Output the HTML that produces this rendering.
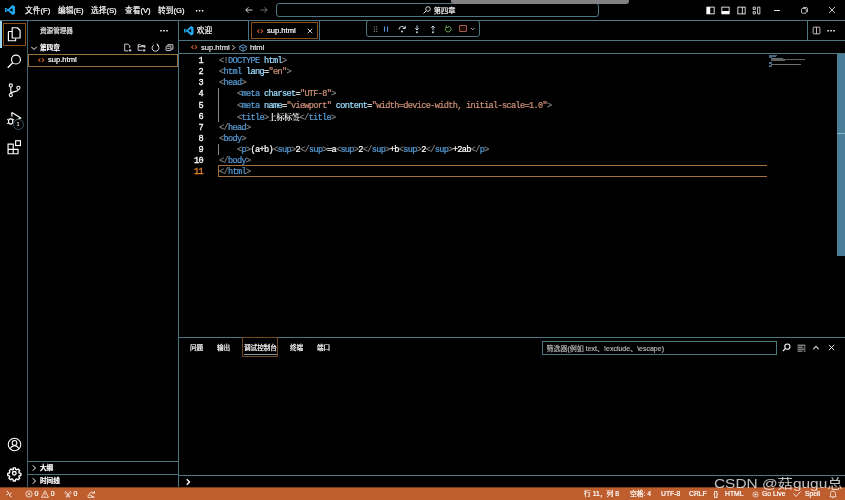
<!DOCTYPE html>
<html><head><meta charset="utf-8"><title>sup.html</title>
<style>

*{box-sizing:border-box;margin:0;padding:0}
html,body{width:845px;height:500px;background:#000;overflow:hidden}
body{will-change:transform}
body{position:relative;font-family:"Liberation Sans","Noto Sans CJK SC",sans-serif;color:#fff;font-size:7.6px;line-height:1}
.a{position:absolute}
.t{position:absolute;white-space:nowrap;line-height:10px;height:10px;-webkit-text-stroke:0.2px}
.hl{position:absolute;height:1px;background:#4d7682}
.vl{position:absolute;width:1px;background:#4d7682}
.code{position:absolute;left:219px;font-family:"Liberation Mono","Noto Sans CJK SC",monospace;font-size:8.6px;letter-spacing:-0.665px;white-space:pre;line-height:11.2px;height:11.2px;color:#fff;-webkit-text-stroke:0.22px}
.ln{position:absolute;left:180px;width:23px;text-align:right;font-family:"Liberation Mono",monospace;font-size:8.6px;letter-spacing:-0.665px;line-height:11.2px;height:11.2px;color:#fff;-webkit-text-stroke:0.3px}
.g{color:#808080}.b{color:#569cd6}.c{color:#9cdcfe}.s{color:#ce9178}
svg.i{position:absolute;overflow:visible}

</style></head><body>
<div class="hl" style="left:0;top:20px;width:845px"></div><div class="vl" style="left:27px;top:21px;height:467px;background:#41636e"></div><div class="vl" style="left:178px;top:21px;height:467px"></div><div class="hl" style="left:179px;top:40px;width:666px"></div><div class="hl" style="left:179px;top:53px;width:666px"></div><div class="hl" style="left:179px;top:337px;width:666px"></div><div class="hl" style="left:179px;top:475px;width:666px"></div><div class="hl" style="left:28px;top:461px;width:150px"></div><div class="hl" style="left:28px;top:474px;width:150px"></div><div class="vl" style="left:248px;top:21px;height:19px"></div><div class="vl" style="left:319px;top:21px;height:19px"></div><div class="vl" style="left:807px;top:21px;height:19px"></div><div class="a" style="left:451px;top:0;width:178px;height:4px;z-index:3;background:#828282;border-radius:0 0 3px 3px"></div><svg class="i" style="left:5px;top:5px" width="10" height="10" viewBox="0 0 100 100"><path d="M74 0 L29 43 L10 28 L0 33 L0 67 L10 72 L29 57 L74 100 L100 88 L100 12 Z M75 30 L75 70 L45 50 Z M10 60 L10 40 L21 50 Z" fill="#23a9f2" fill-rule="evenodd"/></svg><div class="t" style="left:25px;top:5.500px;font-size:7.700px">文件(F)</div><div class="t" style="left:58px;top:5.500px;font-size:7.700px">编辑(E)</div><div class="t" style="left:91px;top:5.500px;font-size:7.700px">选择(S)</div><div class="t" style="left:125px;top:5.500px;font-size:7.700px">查看(V)</div><div class="t" style="left:158px;top:5.500px;font-size:7.700px">转到(G)</div><div class="t" style="left:195.500px;top:5.500px;letter-spacing:0.5px;font-weight:bold">···</div><svg class="i" style="left:245px;top:6px" width="8" height="8" viewBox="0 0 16 16"><path d="M15 8H2M7 2.5L1.5 8L7 13.5" stroke="#fff" stroke-width="1.6" fill="none"/></svg><svg class="i" style="left:260px;top:6px" width="8" height="8" viewBox="0 0 16 16"><path d="M1 8H14M9 2.5L14.5 8L9 13.5" stroke="#8a8a8a" stroke-width="1.6" fill="none"/></svg><div class="a" style="left:276px;top:3px;width:323px;height:14px;border:1px solid #4d7682;border-radius:3px"></div><svg class="i" style="left:423px;top:6px" width="8" height="8" viewBox="0 0 16 16"><circle cx="10" cy="6" r="4.6" stroke="#fff" stroke-width="1.6" fill="none"/><path d="M6.6 9.4L1 15" stroke="#fff" stroke-width="1.8"/></svg><div class="t" style="left:433.800px;top:5.500px;font-size:7.200px">第四章</div><svg class="i" style="left:706px;top:5.5px" width="9" height="9" viewBox="0 0 16 16"><rect x="1.5" y="2" width="13" height="12" stroke="#fff" stroke-width="1.5" fill="none"/><rect x="1.5" y="2" width="6" height="12" fill="#fff"/></svg><svg class="i" style="left:721px;top:5.5px" width="9" height="9" viewBox="0 0 16 16"><rect x="1.5" y="2" width="13" height="12" stroke="#fff" stroke-width="1.5" fill="none"/><rect x="1.5" y="9" width="13" height="5" fill="#fff"/></svg><svg class="i" style="left:737px;top:5.5px" width="9" height="9" viewBox="0 0 16 16"><rect x="1.5" y="2" width="13" height="12" stroke="#fff" stroke-width="1.5" fill="none"/><path d="M9.5 2V14" stroke="#fff" stroke-width="1.5"/></svg><svg class="i" style="left:752px;top:5.5px" width="9" height="9" viewBox="0 0 16 16"><path d="M2 2h4v4H2zM2 10h4v4H2zM10 2h4v12h-4z" stroke="#fff" stroke-width="1.4" fill="none"/></svg><div class="a" style="left:774px;top:10px;width:6px;height:1px;background:#ddd"></div><svg class="i" style="left:801px;top:6.5px" width="7" height="7" viewBox="0 0 14 14"><rect x="1" y="3" width="9.5" height="9.5" rx="2" stroke="#fff" stroke-width="1.4" fill="none"/><path d="M4 1h6.5a2.5 2.5 0 0 1 2.5 2.5V10" stroke="#fff" stroke-width="1.4" fill="none"/></svg><svg class="i" style="left:828px;top:6px" width="8" height="8" viewBox="0 0 16 16"><path d="M2 2L14 14M14 2L2 14" stroke="#fff" stroke-width="1.6"/></svg><div class="a" style="left:0;top:21px;width:1.5px;height:27px;background:#9fd7ee"></div><div class="a" style="left:3px;top:23px;width:23px;height:23px;border:1px solid #8c4f15"></div><svg class="i" style="left:6.25px;top:26.25px" width="16.5" height="16.5" viewBox="0 0 24 24"><path d="M9 2.5h7.5l4 4V17.5H9z" stroke="#fff" stroke-width="1.7" fill="none" stroke-linejoin="round"/><path d="M9 8H4.5a1 1 0 0 0-1 1V21.500h10.500V18" stroke="#fff" stroke-width="1.7" fill="none" stroke-linejoin="round"/></svg><svg class="i" style="left:6.25px;top:53.25px" width="16.5" height="16.5" viewBox="0 0 24 24"><circle cx="14.500" cy="9.5" r="6.500" stroke="#fff" stroke-width="1.7" fill="none"/><path d="M9.8 14.2L2.500 21.500" stroke="#fff" stroke-width="1.9"/></svg><svg class="i" style="left:6.25px;top:82.25px" width="16.5" height="16.5" viewBox="0 0 24 24"><circle cx="7" cy="5" r="2.300" stroke="#fff" stroke-width="1.600" fill="none"/><circle cx="7" cy="19" r="2.300" stroke="#fff" stroke-width="1.600" fill="none"/><circle cx="18" cy="8.500" r="2.300" stroke="#fff" stroke-width="1.600" fill="none"/><path d="M7 7.300V16.700M18 10.800c0 4-11 2.500-11 6" stroke="#fff" stroke-width="1.600" fill="none"/></svg><svg class="i" style="left:6.25px;top:110.25px" width="16.5" height="16.5" viewBox="0 0 24 24"><path d="M8.500 3.500L21.500 11.500L15 15" stroke="#fff" stroke-width="1.700" fill="none" stroke-linejoin="round"/><path d="M8.500 3.500V9.500" stroke="#fff" stroke-width="1.700"/><ellipse cx="6.800" cy="16.800" rx="3.200" ry="3.800" stroke="#fff" stroke-width="1.600" fill="none"/><path d="M1.500 14h2.200M1.500 19.500h2.200M10 14h2M6.800 13V11.500M4.500 12.200l1 1.200M9.200 12.200l-1 1.200" stroke="#fff" stroke-width="1.300"/></svg><div class="a" style="left:12.600px;top:119.200px;width:11px;height:11px;border-radius:5.500px;background:#000;border:1px solid #35545e;font-size:5.500px;line-height:9px;text-align:center;font-weight:bold;color:#d8d8d8">1</div><svg class="i" style="left:6.25px;top:139.25px" width="16.5" height="16.5" viewBox="0 0 24 24"><path d="M3 7.500h7.500v7.500H3zM3 15h7.500v6.500H3zM10.500 15h7v6.500h-7z" stroke="#fff" stroke-width="1.700" fill="none"/><rect x="14" y="2.500" width="7" height="7" stroke="#fff" stroke-width="1.700" fill="none"/></svg><svg class="i" style="left:6.65px;top:437px" width="15" height="15" viewBox="0 0 24 24"><circle cx="12" cy="12" r="10" stroke="#fff" stroke-width="1.700" fill="none"/><circle cx="12" cy="9.500" r="3.800" stroke="#fff" stroke-width="1.700" fill="none"/><path d="M5 19c1.500-4 4-5 7-5s5.500 1 7 5" stroke="#fff" stroke-width="1.700" fill="none"/></svg><svg class="i" style="left:6.9px;top:465.8px" width="14.6" height="14.6" viewBox="0 0 24 24"><path d="M10 2h4l.6 3 1.700.8 2.700-1.600 2.800 2.800-1.600 2.700.8 1.700 3 .6v4l-3 .6-.8 1.700 1.600 2.700-2.800 2.800-2.700-1.600-1.700.8-.6 3h-4l-.6-3-1.700-.8-2.700 1.600-2.800-2.800 1.600-2.700-.8-1.700-3-.6v-4l3-.6.8-1.700L3.200 7l2.800-2.800 2.700 1.600 1.700-.8z" transform="translate(1.200 1.200) scale(0.900)" stroke="#fff" stroke-width="2.500" fill="none" stroke-linejoin="round"/><circle cx="12" cy="12" r="3" stroke="#fff" stroke-width="2.200" fill="none"/></svg><div class="t" style="left:40px;top:26px;color:#e8e8e8;font-size:6.6px">资源管理器</div><div class="t" style="left:160px;top:26px;letter-spacing:0.5px;font-weight:bold">···</div><svg class="i" style="left:30px;top:43.500px" width="8" height="8" viewBox="0 0 16 16"><path d="M2.500 5.500L8 11L13.500 5.500" stroke="#fff" stroke-width="2" fill="none"/></svg><div class="t" style="left:40px;top:43.300px;font-size:6.600px;font-weight:bold">第四章</div><svg class="i" style="left:123px;top:43px" width="9" height="9" viewBox="0 0 16 16"><path d="M9 14H3V2h6l3 3v4" stroke="#fff" stroke-width="1.400" fill="none"/><path d="M12.500 10.500v5M10 13h5" stroke="#fff" stroke-width="1.400"/></svg><svg class="i" style="left:136.500px;top:43px" width="9" height="9" viewBox="0 0 16 16"><path d="M9 13H2V3h4l1.500 1.500H14V9M2 6.500h12" stroke="#fff" stroke-width="1.400" fill="none"/><path d="M12.500 10.500v5M10 13h5" stroke="#fff" stroke-width="1.400"/></svg><svg class="i" style="left:151px;top:43px" width="9" height="9" viewBox="0 0 16 16"><path d="M5 3.500A6 6 0 1 0 11 3.500" stroke="#fff" stroke-width="1.500" fill="none"/><path d="M11 1v3h3" stroke="#fff" stroke-width="1.400" fill="none"/></svg><svg class="i" style="left:165px;top:43px" width="9" height="9" viewBox="0 0 16 16"><rect x="2" y="5.500" width="8.500" height="8" rx="1" stroke="#fff" stroke-width="1.400" fill="none"/><path d="M5 5V3h9v8h-3M4 9.500h4.500" stroke="#fff" stroke-width="1.400" fill="none"/></svg><div class="a" style="left:28px;top:54px;width:150px;height:13px;border:1px solid #9a7040"></div><svg class="i" style="left:37.700px;top:56.900px" width="6.400" height="6.400" viewBox="0 0 16 16"><path d="M6 3.500L1.500 8L6 12.500M10 3.500L14.500 8L10 12.500" stroke="#c45a28" stroke-width="2.700" fill="none"/></svg><div class="t" style="left:48px;top:55px">sup.html</div><svg class="i" style="left:30px;top:464px" width="8" height="8" viewBox="0 0 16 16"><path d="M5.500 2.500L11 8L5.500 13.500" stroke="#fff" stroke-width="2" fill="none"/></svg><div class="t" style="left:40px;top:463px;font-size:6.600px;font-weight:bold">大纲</div><svg class="i" style="left:30px;top:477px" width="8" height="8" viewBox="0 0 16 16"><path d="M5.500 2.500L11 8L5.500 13.500" stroke="#fff" stroke-width="2" fill="none"/></svg><div class="t" style="left:40px;top:476px;font-size:6.600px;font-weight:bold">时间线</div><svg class="i" style="left:184px;top:26px" width="9.500" height="9.500" viewBox="0 0 100 100"><path d="M74 0 L29 43 L10 28 L0 33 L0 67 L10 72 L29 57 L74 100 L100 88 L100 12 Z M75 30 L75 70 L45 50 Z M10 60 L10 40 L21 50 Z" fill="#23a9f2" fill-rule="evenodd"/></svg><div class="t" style="left:196.800px;top:26.200px">欢迎</div><div class="a" style="left:250.500px;top:22px;width:67px;height:16.500px;border:1px solid #8c4f15"></div><svg class="i" style="left:257.050px;top:27.600px" width="6.400" height="6.400" viewBox="0 0 16 16"><path d="M6 3.500L1.500 8L6 12.500M10 3.500L14.500 8L10 12.500" stroke="#c45a28" stroke-width="2.700" fill="none"/></svg><div class="t" style="left:267px;top:26px">sup.html</div><svg class="i" style="left:307px;top:28px" width="6" height="6" viewBox="0 0 12 12"><path d="M1.500 1.500L10.500 10.500M10.500 1.500L1.500 10.500" stroke="#fff" stroke-width="1.600"/></svg><svg class="i" style="left:812px;top:26px" width="9" height="9" viewBox="0 0 16 16"><rect x="2" y="2" width="12" height="12" rx="1.500" stroke="#d9c9c9" stroke-width="1.600" fill="none"/><path d="M8 2v12" stroke="#d9c9c9" stroke-width="1.600"/></svg><div class="t" style="left:827px;top:26px;letter-spacing:0.5px;font-weight:bold">···</div><div class="a" style="left:366px;top:20px;width:114px;height:17px;border:1px solid #4d7682;border-radius:3px;background:#000"></div><svg class="i" style="left:372.50px;top:25.55px" width="5" height="6.5" viewBox="0 0 6 8"><g fill="#8e8e8e"><rect x="1" y="0.5" width="1.3" height="1.3"/><rect x="3.8" y="0.5" width="1.3" height="1.3"/><rect x="1" y="3.3" width="1.3" height="1.3"/><rect x="3.8" y="3.3" width="1.3" height="1.3"/><rect x="1" y="6.1" width="1.3" height="1.3"/><rect x="3.8" y="6.1" width="1.3" height="1.3"/></g></svg><svg class="i" style="left:383.30px;top:25.80px" width="6" height="6" viewBox="0 0 7 8"><path d="M1.5 0.5v7M5.5 0.500v7" stroke="#5d92d6" stroke-width="1.5"/></svg><svg class="i" style="left:397.50px;top:24.80px" width="8" height="8" viewBox="0 0 16 16"><path d="M2 9A6 6 0 0 1 13.500 6.500" stroke="#cfe0ee" stroke-width="2" fill="none"/><path d="M14.500 2v5h-5" stroke="#cfe0ee" stroke-width="2" fill="none"/><circle cx="8" cy="13" r="1.900" fill="#cfe0ee"/></svg><svg class="i" style="left:413.00px;top:24.55px" width="8" height="8.5" viewBox="0 0 16 17"><path d="M8 1v8.500M4.500 6.500L8 10L11.500 6.500" stroke="#cfe0ee" stroke-width="1.900" fill="none"/><circle cx="8" cy="14.500" r="1.900" fill="#cfe0ee"/></svg><svg class="i" style="left:428.50px;top:24.55px" width="8" height="8.5" viewBox="0 0 16 17"><path d="M8 10.500V2M4.500 5.500L8 2L11.500 5.500" stroke="#cfe0ee" stroke-width="1.900" fill="none"/><circle cx="8" cy="14.500" r="1.900" fill="#cfe0ee"/></svg><svg class="i" style="left:443.80px;top:24.80px" width="8" height="8" viewBox="0 0 16 16"><path d="M4 4.500A5.700 5.700 0 1 0 8.500 2.500" stroke="#63b04c" stroke-width="2" fill="none"/><path d="M4.500 0.500v4.500h4.500" stroke="#63b04c" stroke-width="1.900" fill="none"/></svg><div class="a" style="left:459px;top:25.20px;width:7.500px;height:7.200px;border:1.200px solid #a85a4b;border-radius:1px;background:#1c0d0a"></div><svg class="i" style="left:469.70px;top:26.05px" width="5.5" height="5.5" viewBox="0 0 16 16"><path d="M2.500 5.500L8 11L13.500 5.500" stroke="#ddd" stroke-width="2.200" fill="none"/></svg><svg class="i" style="left:190.700px;top:44.400px" width="6.400" height="6.400" viewBox="0 0 16 16"><path d="M6 3.500L1.500 8L6 12.500M10 3.500L14.500 8L10 12.500" stroke="#c45a28" stroke-width="2.700" fill="none"/></svg><div class="t" style="left:201px;top:42.500px;color:#e6e6e6">sup.html</div><svg class="i" style="left:230px;top:44px" width="7" height="7" viewBox="0 0 16 16"><path d="M5.500 2.500L11 8L5.500 13.500" stroke="#fff" stroke-width="2" fill="none"/></svg><svg class="i" style="left:239px;top:43.500px" width="8" height="8" viewBox="0 0 16 16"><path d="M8 1.500L14.500 4.800V11.200L8 14.500L1.500 11.200V4.800zM1.500 4.800L8 8L14.500 4.800M8 8V14.500" stroke="#75beff" stroke-width="1.400" fill="none" stroke-linejoin="round"/></svg><div class="t" style="left:250px;top:42.500px;color:#e6e6e6">html</div><div class="ln" style="top:56.0px;color:#fff">1</div><div class="code" style="top:56.0px"><span class="g">&lt;!</span><span class="b">DOCTYPE</span> <span class="c">html</span><span class="g">&gt;</span></div><div class="ln" style="top:67.1px;color:#fff">2</div><div class="code" style="top:67.1px"><span class="g">&lt;</span><span class="b">html</span> <span class="c">lang</span>=<span class="s">&quot;en&quot;</span><span class="g">&gt;</span></div><div class="ln" style="top:78.3px;color:#fff">3</div><div class="code" style="top:78.3px"><span class="g">&lt;</span><span class="b">head</span><span class="g">&gt;</span></div><div class="ln" style="top:89.4px;color:#fff">4</div><div class="code" style="top:89.4px">    <span class="g">&lt;</span><span class="b">meta</span> <span class="c">charset</span>=<span class="s">&quot;UTF-8&quot;</span><span class="g">&gt;</span></div><div class="ln" style="top:100.5px;color:#fff">5</div><div class="code" style="top:100.5px">    <span class="g">&lt;</span><span class="b">meta</span> <span class="c">name</span>=<span class="s">&quot;viewport&quot;</span> <span class="c">content</span>=<span class="s">&quot;width=device-width, initial-scale=1.0&quot;</span><span class="g">&gt;</span></div><div class="ln" style="top:111.7px;color:#fff">6</div><div class="code" style="top:111.7px">    <span class="g">&lt;</span><span class="b">title</span><span class="g">&gt;</span><span style="letter-spacing:-0.41px;font-size:8.200px;color:#e4e4e4;font-family:'Liberation Serif','Noto Serif CJK SC',serif;font-weight:bold;-webkit-text-stroke:0">上标标签</span><span class="g">&lt;/</span><span class="b">title</span><span class="g">&gt;</span></div><div class="ln" style="top:122.8px;color:#fff">7</div><div class="code" style="top:122.8px"><span class="g">&lt;/</span><span class="b">head</span><span class="g">&gt;</span></div><div class="ln" style="top:133.9px;color:#fff">8</div><div class="code" style="top:133.9px"><span class="g">&lt;</span><span class="b">body</span><span class="g">&gt;</span></div><div class="ln" style="top:145.0px;color:#fff">9</div><div class="code" style="top:145.0px">    <span class="g">&lt;</span><span class="b">p</span><span class="g">&gt;</span>(a+b)<span class="g">&lt;</span><span class="b">sup</span><span class="g">&gt;</span>2<span class="g">&lt;/</span><span class="b">sup</span><span class="g">&gt;</span>=a<span class="g">&lt;</span><span class="b">sup</span><span class="g">&gt;</span>2<span class="g">&lt;/</span><span class="b">sup</span><span class="g">&gt;</span>+b<span class="g">&lt;</span><span class="b">sup</span><span class="g">&gt;</span>2<span class="g">&lt;/</span><span class="b">sup</span><span class="g">&gt;</span>+2ab<span class="g">&lt;/</span><span class="b">p</span><span class="g">&gt;</span></div><div class="ln" style="top:156.2px;color:#fff">10</div><div class="code" style="top:156.2px"><span class="g">&lt;/</span><span class="b">body</span><span class="g">&gt;</span></div><div class="ln" style="top:167.3px;color:#e8862a">11</div><div class="code" style="top:167.3px"><span class="g">&lt;/</span><span class="b">html</span><span class="g">&gt;</span></div><div class="a" style="left:218px;top:88px;width:1px;height:33.500px;background:#8a8a8a"></div><div class="a" style="left:218px;top:143.500px;width:1px;height:11px;background:#8a8a8a"></div><div class="a" style="left:218px;top:165px;width:549px;height:12px;border:1px solid #a5703c;border-right:none"></div><div class="a" style="left:769px;top:54.60px;width:8px;height:0.800px;background:#5a7f9a;opacity:.8"></div><div class="a" style="left:769px;top:55.77px;width:7px;height:0.800px;background:#5a7f9a;opacity:.8"></div><div class="a" style="left:769px;top:56.94px;width:3px;height:0.800px;background:#5a7f9a;opacity:.8"></div><div class="a" style="left:771px;top:58.11px;width:12px;height:0.800px;background:#6f8aa0;opacity:.8"></div><div class="a" style="left:771px;top:59.28px;width:34px;height:0.800px;background:#7b7b72;opacity:.8"></div><div class="a" style="left:771px;top:60.45px;width:14px;height:0.800px;background:#7b7b72;opacity:.8"></div><div class="a" style="left:769px;top:61.62px;width:3px;height:0.800px;background:#5a7f9a;opacity:.8"></div><div class="a" style="left:769px;top:62.79px;width:3px;height:0.800px;background:#5a7f9a;opacity:.8"></div><div class="a" style="left:771px;top:63.96px;width:30px;height:0.800px;background:#8a8a8a;opacity:.8"></div><div class="a" style="left:769px;top:65.13px;width:3px;height:0.800px;background:#5a7f9a;opacity:.8"></div><div class="a" style="left:769px;top:66.30px;width:3px;height:0.800px;background:#5a7f9a;opacity:.8"></div><div class="a" style="left:837px;top:54px;width:8px;height:202px;background:#4a7d97"></div><div class="a" style="left:837px;top:133px;width:8px;height:1px;background:#8fb6c8"></div><div class="t" style="left:190px;top:343px;font-size:6.600px;color:#fff">问题</div><div class="t" style="left:217px;top:343px;font-size:6.600px;color:#fff">输出</div><div class="t" style="left:244px;top:343px;font-size:6.600px;color:#fff">调试控制台</div><div class="t" style="left:290px;top:343px;font-size:6.600px;color:#fff">终端</div><div class="t" style="left:317px;top:343px;font-size:6.600px;color:#fff">端口</div><div class="a" style="left:242px;top:337px;width:36px;height:20px;border:1px solid #74481f"></div><div class="a" style="left:244px;top:354px;width:32.500px;height:1px;background:#8b99a3"></div><div class="a" style="left:542px;top:340.500px;width:235px;height:14.500px;border:1px solid #4d7682"></div><div class="t" style="left:546.500px;top:343.500px;font-size:7px;color:#b4b4b4">筛选器(例如 text、!exclude、\escape)</div><svg class="i" style="left:781.500px;top:343px" width="9" height="9" viewBox="0 0 16 16"><circle cx="9.500" cy="6.500" r="4.600" stroke="#fff" stroke-width="1.900" fill="none"/><path d="M6.200 9.800L1.500 14.500" stroke="#fff" stroke-width="2.100"/></svg><svg class="i" style="left:797px;top:343.500px" width="9" height="8" viewBox="0 0 16 14"><path d="M1 2h14M1 5.500h9M1 9h14M1 12.500h9M12 5.500h3M12 12.500h3" stroke="#ddd" stroke-width="1.500"/></svg><svg class="i" style="left:812px;top:343.500px" width="8" height="8" viewBox="0 0 16 16"><path d="M2.500 10.500L8 5L13.500 10.500" stroke="#fff" stroke-width="2.100" fill="none"/></svg><svg class="i" style="left:828px;top:344px" width="7" height="7" viewBox="0 0 12 12"><path d="M1.500 1.500L10.500 10.500M10.500 1.500L1.500 10.500" stroke="#fff" stroke-width="1.500"/></svg><svg class="i" style="left:184px;top:477.800px" width="8" height="8" viewBox="0 0 16 16"><path d="M5.500 2.500L11 8L5.500 13.500" stroke="#fff" stroke-width="2.800" fill="none"/></svg><div class="a" style="left:0;top:487px;width:845px;height:13px;background:linear-gradient(#7a3d1d 0,#7a3d1d 1px,#be5e2e 1px)"></div><svg class="i" style="left:5px;top:490px" width="8" height="8" viewBox="0 0 16 16"><path d="M3 1.500L7.500 6L3 10.500M13 5.500L8.500 10L13 14.500" stroke="#fff" stroke-width="2" fill="none"/></svg><svg class="i" style="left:25px;top:490px" width="8" height="8" viewBox="0 0 16 16"><circle cx="8" cy="8" r="6.300" stroke="#fff" stroke-width="1.400" fill="none"/><path d="M5.300 5.300L10.700 10.700M10.700 5.300L5.300 10.700" stroke="#fff" stroke-width="1.400"/></svg><div class="t" style="left:34.500px;top:489px;font-size:7px">0</div><svg class="i" style="left:41px;top:490px" width="8" height="8" viewBox="0 0 16 16"><path d="M8 1.500L15 14.500H1z" stroke="#fff" stroke-width="1.400" fill="none" stroke-linejoin="round"/><path d="M8 6v4.500M8 11.800v1.400" stroke="#fff" stroke-width="1.400"/></svg><div class="t" style="left:50.700px;top:489px;font-size:7px">0</div><svg class="i" style="left:64px;top:490px" width="8" height="8" viewBox="0 0 16 16"><path d="M8 6V15M4 15L8 7L12 15M5.500 12h5" stroke="#fff" stroke-width="1.300" fill="none"/><path d="M3.500 2a5 5 0 0 0 0 7M12.500 2a5 5 0 0 1 0 7M6 3.500a2.500 2.500 0 0 0 0 4M10 3.500a2.500 2.500 0 0 1 0 4" stroke="#fff" stroke-width="1.200" fill="none"/></svg><div class="t" style="left:73.500px;top:489px;font-size:7px">0</div><svg class="i" style="left:87px;top:490px" width="9" height="8" viewBox="0 0 18 16"><path d="M4 9a6 6 0 0 1 10-3" stroke="#fff" stroke-width="1.500" fill="none"/><path d="M15 2v4.500h-4.500" stroke="#fff" stroke-width="1.500" fill="none"/><path d="M2 10.500h7v4.500H2zM11 12l4 2.500-4 .5z" stroke="#fff" stroke-width="1.300" fill="none"/></svg><div class="t" style="left:584px;top:489px;font-size:6.800px">行 11，列 8</div><div class="t" style="left:630px;top:489px;font-size:6.800px">空格: 4</div><div class="t" style="left:661px;top:489px;font-size:6.800px">UTF-8</div><div class="t" style="left:689px;top:489px;font-size:6.800px">CRLF</div><div class="t" style="left:713.500px;top:489px;font-size:6.800px">{}</div><div class="t" style="left:725px;top:489px;font-size:6.800px">HTML</div><svg class="i" style="left:752px;top:490.500px" width="7" height="7" viewBox="0 0 16 16"><circle cx="8" cy="8" r="6" stroke="#fff" stroke-width="1.500" fill="none"/><circle cx="8" cy="8" r="2.500" fill="#fff"/></svg><div class="t" style="left:762px;top:489px;font-size:6.800px">Go Live</div><svg class="i" style="left:793px;top:490.500px" width="8" height="7" viewBox="0 0 16 14"><path d="M1 5L6 11L15 1" stroke="#fff" stroke-width="1.600" fill="none"/></svg><div class="t" style="left:805px;top:489px;font-size:6.800px">Spell</div><svg class="i" style="left:829px;top:490px" width="8" height="8" viewBox="0 0 16 16"><path d="M3 12V7a5 5 0 0 1 10 0v5l1.500 1.500h-13zM6.500 14.500a1.500 1.500 0 0 0 3 0" stroke="#fff" stroke-width="1.400" fill="none"/></svg><div class="a" style="left:713.800px;top:475.900px;white-space:nowrap;font-size:13px;line-height:16px;color:rgba(255,255,255,.75);transform:scaleX(1.185);transform-origin:0 0">CSDN @菇gugu总</div>
</body></html>
